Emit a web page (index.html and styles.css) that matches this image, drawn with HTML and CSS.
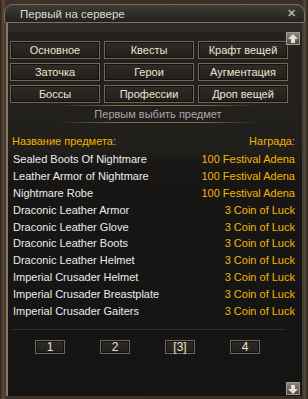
FILE: index.html
```html
<html lang="ru">

<head>
    <meta charset="UTF-8">
    <meta name="viewport" content="width=device-width, initial-scale=1.0">
    <title>Первый на сервере</title>
    <link rel="stylesheet" href="styles.css">
</head>

<body>
    <div class="window">
        <!-- Title bar -->
        <div class="titlebar">
            <span class="title">Первый на сервере</span>
            <span class="close">&#x2715;</span>
        </div>

        <div class="panel">
            <!-- Category tabs -->
            <div class="tabs">
                <button class="tab">Основное</button>
                <button class="tab">Квесты</button>
                <button class="tab">Крафт вещей</button>
                <button class="tab">Заточка</button>
                <button class="tab">Герои</button>
                <button class="tab">Аугментация</button>
                <button class="tab">Боссы</button>
                <button class="tab">Профессии</button>
                <button class="tab">Дроп вещей</button>
            </div>

            <div class="subtitle">Первым выбить предмет</div>

            <div class="list-head">
                <span>Название предмета:</span>
                <span>Награда:</span>
            </div>

            <div class="list">
                <div class="row"><span>Sealed Boots Of Nightmare</span><span class="reward">100 Festival Adena</span></div>
                <div class="row"><span>Leather Armor of Nightmare</span><span class="reward">100 Festival Adena</span></div>
                <div class="row"><span>Nightmare Robe</span><span class="reward">100 Festival Adena</span></div>
                <div class="row"><span>Draconic Leather Armor</span><span class="reward">3 Coin of Luck</span></div>
                <div class="row"><span>Draconic Leather Glove</span><span class="reward">3 Coin of Luck</span></div>
                <div class="row"><span>Draconic Leather Boots</span><span class="reward">3 Coin of Luck</span></div>
                <div class="row"><span>Draconic Leather Helmet</span><span class="reward">3 Coin of Luck</span></div>
                <div class="row"><span>Imperial Crusader Helmet</span><span class="reward">3 Coin of Luck</span></div>
                <div class="row"><span>Imperial Crusader Breastplate</span><span class="reward">3 Coin of Luck</span></div>
                <div class="row"><span>Imperial Crusader Gaiters</span><span class="reward">3 Coin of Luck</span></div>
            </div>

            <div class="pager">
                <button class="page">1</button>
                <button class="page">2</button>
                <button class="page">[3]</button>
                <button class="page">4</button>
            </div>

            <!-- Scroll buttons -->
            <div class="scroll-btn scroll-up">
                <svg width="12" height="12" viewBox="0 0 12 12">
                    <path d="M6 1 L11 6 L8 6 L8 10 L4 10 L4 6 L1 6 Z" fill="#e8e2d0" />
                </svg>
            </div>
            <div class="scroll-btn scroll-down">
                <svg width="12" height="12" viewBox="0 0 12 12">
                    <path d="M6 11 L11 6 L8 6 L8 2 L4 2 L4 6 L1 6 Z" fill="#e8e2d0" />
                </svg>
            </div>
        </div>
    </div>
</body>

</html>
```

FILE: styles.css
```css
body {
    margin: 0;
    background: #3a2a20;
    font-family: "Liberation Sans", Arial, sans-serif;
}

.window {
    width: 308px;
    height: 399px;
    box-sizing: border-box;
    padding: 0 5px 3px 6px;
    background: linear-gradient(90deg, #2a221c, #5a4a3a 3px, #3e3228 6px, #3a2e26 302px, #5a4a3a 305px, #2a221c);
    display: flex;
    flex-direction: column;
}

.titlebar {
    height: 17px;
    margin: 4px -2px 0 -2px;
    padding: 0 8px 0 15px;
    border: 1px solid #7a7262;
    border-radius: 9px 9px 2px 2px;
    background: linear-gradient(#3e3c34, #23221d);
    display: flex;
    align-items: center;
    justify-content: space-between;
}

.title {
    color: #dcdcd4;
    font-size: 11.5px;
}

.close {
    color: #b4ac98;
    font-size: 11px;
    font-weight: bold;
}

.panel {
    position: relative;
    flex: 1;
    border-left: 2px solid #8a7a62;
    border-right: 1px solid #4a4036;
    background: linear-gradient(#2e2b27 0, #2e2b27 8px, #24211e 9px, #211f1c 126px, #171615 146px, #141414);
    padding: 18px 0 0 2px;
}

.tabs {
    display: grid;
    grid-template-columns: repeat(3, 90px);
    grid-auto-rows: 18px;
    gap: 4px;
}

.tab,
.page {
    background: linear-gradient(#2f2b26, #221f1b);
    border: 1px solid #6e675a;
    box-shadow: inset 0 0 0 1px #14120f;
    color: #ece4d2;
    font-family: "Liberation Sans", Arial, sans-serif;
    font-size: 11px;
    padding: 0;
    margin: 0;
}

.subtitle {
    width: 200px;
    margin: 2px 0 0 48px;
    padding: 1px 0 1px;
    height: 14px;
    line-height: 14px;
    text-align: center;
    color: #a8a8a6;
    font-size: 11px;
    border-top: 1px solid;
    border-bottom: 1px solid;
    border-image: linear-gradient(90deg, transparent, #8a6a48 30%, #8a6a48 70%, transparent) 1;
}

.list-head {
    display: flex;
    justify-content: space-between;
    margin: 11px 7px 0 2px;
    height: 17px;
    line-height: 15px;
    color: #f0b400;
    font-size: 11px;
}

.list {
    margin: 0 7px 0 3px;
}

.row {
    display: flex;
    justify-content: space-between;
    height: 16.9px;
    line-height: 17px;
    color: #ececec;
    font-size: 11px;
}

.reward {
    color: #f2b600;
}

.pager {
    margin: 9px 17px 0 3px;
    padding-top: 10px;
    border-top: 1px solid #343230;
    display: flex;
    gap: 35px;
    padding-left: 22px;
}

.page {
    width: 30px;
    height: 14px;
    line-height: 12px;
    font-size: 12px;
}

.scroll-btn {
    position: absolute;
    right: 2px;
    width: 14px;
    height: 13px;
    background: linear-gradient(#8a8476, #4e4a42);
    border: 1px solid #a29a88;
    box-sizing: border-box;
    display: flex;
    align-items: center;
    justify-content: center;
}

.scroll-up {
    top: 9px;
}

.scroll-down {
    bottom: 1px;
}
```
